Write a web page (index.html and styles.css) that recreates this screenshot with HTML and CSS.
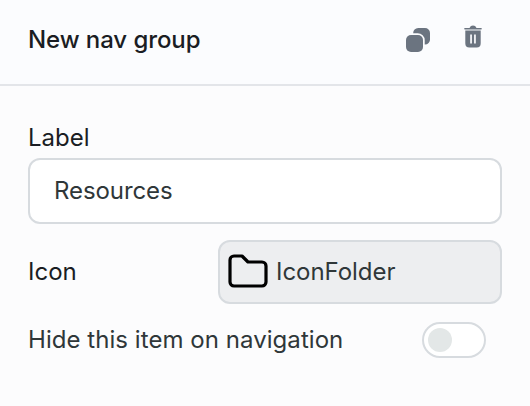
FILE: index.html
```html
<!DOCTYPE html>
<html lang="en">
<head>
<meta charset="utf-8">
<title>New nav group</title>
<link rel="stylesheet" href="styles.css">
</head>
<body>
<header class="header">
  <h1 class="title">New nav group</h1>
  <div class="actions">
    <svg class="copy" width="24" height="24" viewBox="0 0 24 24" fill="currentColor"><rect y="7" width="17" height="17" rx="5"/><path d="M7.2 5.2A5 5 0 0 1 12.200 0H19a5 5 0 0 1 5 5v6a5 5 0 0 1-5.300 5.400V12.200a7 7 0 0 0-7-7z"/></svg>
    <svg class="trash" width="18" height="24" viewBox="0 0 18 24" fill="currentColor"><path d="M.8 3H5.500Q6.500.6 9 .6T12.500 3h4.700q.6 0 .6.800t-.6.800H.8q-.6 0-.6-.8T.8 3z"/><path fill-rule="evenodd" d="M1.300 5.500h15.400v12.700q0 4.300-4 4.300h-7.400q-4 0-4-4.300zM6.200 9.500v9h1.700v-9zM10.100 9.500v9h1.700v-9z"/></svg>
  </div>
</header>
<main class="form">
  <label class="label" for="label">Label</label>
  <input class="input" id="label" type="text" value="Resources">
  <div class="row icon-row">
    <span class="label">Icon</span>
    <button class="picker" type="button">
      <svg width="48" height="48" viewBox="0 0 24 24" fill="none" stroke="#000" stroke-width="1.600" stroke-linejoin="round"><path d="M5 4h4l3 3h7a2 2 0 0 1 2 2v8a2 2 0 0 1-2 2H5a2 2 0 0 1-2-2V6a2 2 0 0 1 2-2"/></svg>
      <span>IconFolder</span>
    </button>
  </div>
  <div class="row hide-row">
    <span class="hide-text">Hide this item on navigation</span>
    <span class="switch" role="switch" aria-checked="false"><span class="knob"></span></span>
  </div>
</main>
</body>
</html>
```
FILE: styles.css
```css
* { box-sizing: border-box; }
body {
  margin: 0;
  min-height: 100vh;
  background: #fcfcfd;
  color: #2f3739;
  font: 400 24px/32px Inter, "Liberation Sans", sans-serif;
}
.header {
  display: flex;
  justify-content: space-between;
  height: 86px;
  padding: 24px 48px 0 28px;
  background: #fbfcfe;
  border-bottom: 2px solid #e3e5e9;
}
.title {
  margin: 0;
  color: #1a1d23;
  font-size: 24px;
  font-weight: 500;
  line-height: 32px;
  letter-spacing: -0.08px;
}
.actions { display: flex; gap: 34px; color: #6b7480; }
.copy { margin-top: 4px; }
.trash { margin-top: 1px; }
.form { padding: 36px 28px 0; }
.label { display: block; color: #1a1d23; }
.input {
  display: block;
  width: 100%;
  height: 66px;
  margin-top: 4px;
  padding: 0 24px 2px;
  border: 2px solid #d7dbdf;
  border-radius: 12px;
  background: #fff;
  color: inherit;
  font: inherit;
  letter-spacing: -0.08px;
}
.row { display: flex; align-items: center; justify-content: space-between; }
.icon-row { margin-top: 16px; }
.picker {
  display: flex;
  align-items: center;
  gap: 4px;
  width: 284px;
  height: 64px;
  padding: 0 4px;
  border: 2px solid #d7dbdf;
  border-radius: 12px;
  background: #edeef0;
  color: inherit;
  font: inherit;
  letter-spacing: -0.05px;
}
.hide-row { margin-top: 18px; padding-right: 16px; }
.hide-text { letter-spacing: 0.05px; }
.switch {
  display: flex;
  align-items: center;
  width: 64px;
  height: 36px;
  padding: 0 4px;
  border: 2px solid #d7dbdf;
  border-radius: 18px;
  background: #fff;
}
.knob { width: 24px; height: 24px; border-radius: 50%; background: #e3e7e7; }
```
